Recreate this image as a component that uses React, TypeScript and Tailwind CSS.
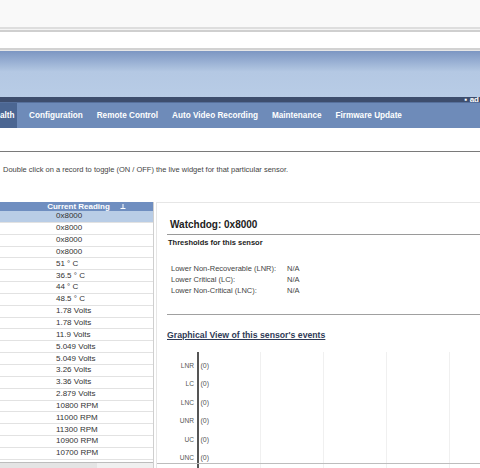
import React from 'react';

const navItems = ['Configuration', 'Remote Control', 'Auto Video Recording', 'Maintenance', 'Firmware Update'];

const readings = [
  '0x8000', '0x8000', '0x8000', '0x8000',
  '51 ° C', '36.5 ° C', '44 ° C', '48.5 ° C',
  '1.78 Volts', '1.78 Volts', '11.9 Volts', '5.049 Volts', '5.049 Volts',
  '3.26 Volts', '3.36 Volts', '2.879 Volts',
  '10800 RPM', '11000 RPM', '11300 RPM', '10900 RPM', '10700 RPM',
];

const thresholds = [
  { label: 'Lower Non-Recoverable (LNR):', value: 'N/A' },
  { label: 'Lower Critical (LC):', value: 'N/A' },
  { label: 'Lower Non-Critical (LNC):', value: 'N/A' },
];

const chartRows = ['LNR', 'LC', 'LNC', 'UNR', 'UC', 'UNC'];

const App = () => {
  return (
    <div className="w-[480px] h-[468px] overflow-hidden bg-white flex flex-col" style={{ fontFamily: '"Liberation Sans", Arial, sans-serif' }}>
      {/* browser chrome */}
      <div className="h-[27px] bg-[#f9f9f9] shrink-0" />
      <div className="h-[2px] bg-[#dedede] shrink-0" />
      <div className="h-[1px] bg-[#f4f4f4] shrink-0" />
      <div className="h-[2px] bg-[#cfcfcf] shrink-0" />
      <div className="h-[16px] bg-white shrink-0" />
      <div className="h-[2px] bg-[#d2d2d2] shrink-0" />
      <div className="h-[1px] bg-[#e6e6e6] shrink-0" />

      {/* banner */}
      <div className="h-[46px] shrink-0 bg-gradient-to-b from-[#7c96c2] via-[#b4c8e3] via-45% to-[#b8cce6]" />
      <div className="h-[5px] shrink-0 bg-[#3d4d6d] flex justify-end items-center pr-[1px]">
        <span className="text-white text-[8px] leading-none font-bold">▪ ad</span>
      </div>

      {/* nav */}
      <div className="h-[26px] shrink-0 bg-[#6e8bb9] border-t border-[#56709c] flex items-center text-white text-[8.2px] font-bold">
        <div className="h-full w-[17px] bg-[#4b6692] flex items-center pt-[2px]">
          <span>alth</span>
        </div>
        <div className="flex gap-[14px] ml-[12px] pt-[2px]">
          {navItems.map((n) => (
            <span key={n}>{n}</span>
          ))}
        </div>
      </div>

      <div className="h-[23px] shrink-0" />
      <div className="h-[1px] bg-[#7a7a7a] shrink-0" />
      <div className="pt-[12px] pl-[3px] text-[7.5px] text-[#444] h-[50px] shrink-0">
        Double click on a record to toggle (ON / OFF) the live widget for that particular sensor.
      </div>

      {/* content */}
      <div className="flex flex-1 min-h-0">
        {/* left table */}
        <div className="w-[154px] shrink-0 border-r border-[#cfcfcf] flex flex-col overflow-hidden">
          <div className="h-[9px] shrink-0 bg-[#6f8ec0] flex items-center justify-center text-white text-[8px] font-bold leading-none pl-[20px] gap-[10px]">
            <span>Current Reading</span>
            <svg width="6" height="5" viewBox="0 0 6 5"><path d="M3 0v4M0.5 4.5h5" stroke="#fff" strokeWidth="1" /></svg>
          </div>
          <div className="flex-1 overflow-hidden">
            {readings.map((r, i) => (
              <div
                key={i}
                className={`h-[11.85px] flex items-center pl-[56px] text-[8px] text-[#333] border-b border-[#e2e2e2] ${i === 0 ? 'bg-[#b9cde6]' : ''}`}
              >
                {r}
              </div>
            ))}
          </div>
          <div className="h-[6px] shrink-0 bg-[#f0f0f0] border-t border-[#bdbdbd] w-full">
            <div className="w-[97px] h-full bg-[#e4e4e4]" />
          </div>
        </div>

        {/* right panel */}
        <div className="flex-1 ml-[2px] border-l border-t border-[#e6e6e6] flex flex-col overflow-hidden">
          <div className="pl-[10px] pt-[14px]">
            <div className="text-[10px] font-bold text-[#222] pl-[3px] pb-[2px] border-b border-[#9a9a9a]">Watchdog: 0x8000</div>
            <div className="text-[7.5px] font-bold text-[#222] pt-[2px] pl-[1px]">Thresholds for this sensor</div>
            <div className="pt-[16px] pl-[4px] flex flex-col gap-[1.5px]">
              {thresholds.map((t) => (
                <div key={t.label} className="flex text-[7.5px] text-[#444] leading-[9.5px]">
                  <span className="w-[116px]">{t.label}</span>
                  <span>{t.value}</span>
                </div>
              ))}
            </div>
            <div className="mt-[18px] border-b border-[#a0a0a0]" />
            <div className="pt-[14px] text-[8.7px] font-bold text-[#2f3b57] underline">Graphical View of this sensor's events</div>
          </div>

          {/* chart */}
          <div className="flex-1 relative mt-[10px] flex">
            <div className="w-[40px] shrink-0 flex flex-col items-end pr-[3px] pt-[9px] gap-[8.5px] text-[6.6px] text-[#555]">
              {chartRows.map((c) => (
                <div key={c} className="h-[10px] flex items-center">{c}</div>
              ))}
            </div>
            <div className="w-[1.5px] bg-[#555] shrink-0" />
            <div className="flex-1 grid grid-cols-[62px_63px_63px_63px_1fr]">
              <div className="border-r border-[#f0f0f0] pt-[9px] pl-[2px] flex flex-col gap-[8.5px] text-[7px] text-[#555]">
                {chartRows.map((c) => (
                  <div key={c} className="h-[10px] flex items-center">(0)</div>
                ))}
              </div>
              <div className="border-r border-[#f0f0f0]" />
              <div className="border-r border-[#f0f0f0]" />
              <div className="border-r border-[#f0f0f0]" />
              <div />
            </div>
            <div className="absolute left-0 right-0 bottom-[4px] h-[1px] bg-[#bdbdbd]" />
          </div>
        </div>
      </div>
    </div>
  );
};

export default App;
